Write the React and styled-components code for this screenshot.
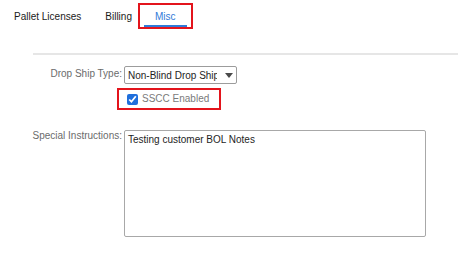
import React from 'react';
import styled, { createGlobalStyle } from 'styled-components';

const GlobalStyle = createGlobalStyle`
  body {
    margin: 0;
    background: #ffffff;
    font-family: "Liberation Sans", Arial, sans-serif;
    font-size: 10px;
    color: #222;
  }
`;

const Page = styled.div`
  width: 474px;
  height: 263px;
  background: #fff;
`;

// tab strip across the top
const TabBar = styled.div`
  display: flex;
  align-items: center;
  padding: 3px 0 0 14px;
`;

const Tab = styled.div`
  padding: 5px ${p => (p.$active ? 11 : 0)}px 1px;
  line-height: 14px;
  border-bottom: 2px solid ${p => (p.$active ? '#2f7ad8' : 'transparent')};
  color: ${p => (p.$active ? '#2f7ad8' : '#1a1a1a')};
  margin-right: ${p => p.$gap || 0}px;
  cursor: pointer;
  white-space: nowrap;
`;

// red marker box drawn around highlighted items
const Highlight = styled.div`
  display: inline-flex;
  align-items: center;
  border: 2px solid #e3141c;
  padding: ${p => p.$pad || '0 4px'};
  margin-left: ${p => p.$shift || 0}px;
`;

const Divider = styled.hr`
  border: none;
  height: 2px;
  background: #e6e6e6;
  margin: 24px 16px 0 33px;
`;

const Form = styled.div`
  display: grid;
  grid-template-columns: 122px 302px;
  column-gap: 2px;
  align-items: start;
  padding-top: 11px;
`;

const Label = styled.label`
  text-align: right;
  color: #6b6b6b;
  line-height: 14px;
  padding-top: ${p => p.$top || 0}px;
  white-space: nowrap;
`;

const Field = styled.div`
  display: flex;
  margin-top: ${p => p.$mt || 0}px;
`;

const SelectBox = styled.div`
  display: flex;
  align-items: center;
  width: 113px;
  height: 18px;
  box-sizing: border-box;
  border: 1px solid #9c9c9c;
  border-radius: 2px;
  background: #fff;
`;

const Select = styled.select`
  appearance: none;
  border: none;
  outline: none;
  background: transparent;
  font: inherit;
  font-size: 10px;
  color: #1e1e1e;
  width: 92px;
  padding: 0 0 0 3px;
  margin: 0;
  height: 16px;
`;

const Arrow = styled.svg`
  width: 8px;
  height: 5px;
  margin-left: 8px;
  fill: #4a4a4a;
`;

const Check = styled.input`
  width: 11px;
  height: 11px;
  margin: 0 4px 0 0;
  accent-color: #1f6fdc;
`;

const CheckText = styled.span`
  color: #7a7a7a;
  line-height: 18px;
`;

const TextArea = styled.textarea`
  width: 302px;
  height: 107px;
  box-sizing: border-box;
  border: 1px solid #a8a8a8;
  border-radius: 2px;
  padding: 2px 3px;
  font: inherit;
  font-size: 10px;
  line-height: 14px;
  color: #1e1e1e;
  resize: none;
  outline: none;
`;

export default function App() {
  return (
    <Page>
      <GlobalStyle />
      <TabBar>
        <Tab $gap={24}>Pallet Licenses</Tab>
        <Tab $gap={6}>Billing</Tab>
        <Highlight>
          <Tab $active>Misc</Tab>
        </Highlight>
      </TabBar>
      <Divider />
      <Form>
        <Label $top={1}>Drop Ship Type:</Label>
        <Field>
          <SelectBox>
            <Select defaultValue="nb">
              <option value="nb">Non-Blind Drop Ship</option>
              <option value="b">Blind Drop Ship</option>
            </Select>
            <Arrow viewBox="0 0 8 5">
              <path d="M0 0 H8 L4 5 Z" />
            </Arrow>
          </SelectBox>
        </Field>
        <span />
        <Field $mt={4}>
          <Highlight $shift={-7} $pad="0 10px 0 8px">
            <Check type="checkbox" defaultChecked />
            <CheckText>SSCC Enabled</CheckText>
          </Highlight>
        </Field>
        <Label $top={19}>Special Instructions:</Label>
        <Field $mt={20}>
          <TextArea defaultValue="Testing customer BOL Notes" />
        </Field>
      </Form>
    </Page>
  );
}
